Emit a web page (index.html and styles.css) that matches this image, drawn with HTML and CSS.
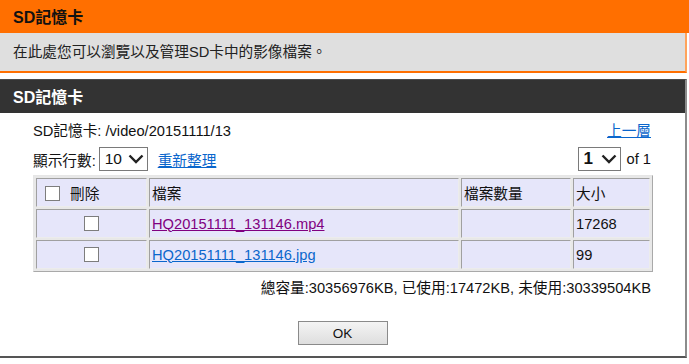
FILE: index.html
```html
<!DOCTYPE html>
<html lang="zh-Hant">
<head>
<meta charset="utf-8">
<title>SD記憶卡</title>
<link rel="stylesheet" href="styles.css">
</head>
<body>
<div class="top-title">SD記憶卡</div>
<div class="top-desc">在此處您可以瀏覽以及管理SD卡中的影像檔案。</div>
<div class="box">
  <div class="box-title">SD記憶卡</div>
  <div class="box-body">
    <div class="path-row">
      <span>SD記憶卡: /video/20151111/13</span>
      <a class="link" href="#">上一層</a>
    </div>
    <div class="ctrl-row">
      <div class="ctrl-left">
        <span>顯示行數:</span>
        <span class="select sel-rows">10<svg class="chev" width="16" height="10" viewBox="0 0 16 10"><path d="M1.5 1.5 L8 8 L14.5 1.5" fill="none" stroke="#222" stroke-width="2.4"/></svg></span>
        <a class="link" href="#">重新整理</a>
      </div>
      <div class="ctrl-right">
        <span class="select sel-page">1<svg class="chev" width="16" height="10" viewBox="0 0 16 10"><path d="M1.5 1.5 L8 8 L14.5 1.5" fill="none" stroke="#222" stroke-width="2.4"/></svg></span>
        <span>of 1</span>
      </div>
    </div>
    <table class="files">
      <colgroup>
        <col class="c1"><col class="c2"><col class="c3"><col class="c4">
      </colgroup>
      <tr>
        <td class="head-del"><span class="cb"></span><span>刪除</span></td>
        <td>檔案</td>
        <td>檔案數量</td>
        <td>大小</td>
      </tr>
      <tr>
        <td class="center"><span class="cb"></span></td>
        <td><a class="file visited" href="#">HQ20151111_131146.mp4</a></td>
        <td></td>
        <td>17268</td>
      </tr>
      <tr>
        <td class="center"><span class="cb"></span></td>
        <td><a class="file link" href="#">HQ20151111_131146.jpg</a></td>
        <td></td>
        <td>99</td>
      </tr>
    </table>
    <div class="total">總容量:30356976KB, 已使用:17472KB, 未使用:30339504KB</div>
    <div class="actions"><button class="btn" type="button">OK</button></div>
  </div>
</div>
</body>
</html>
```
FILE: styles.css
```css
html, body {
  margin: 0;
  padding: 0;
  background: #ffffff;
}
body {
  width: 689px;
  font-family: "Liberation Sans", "Noto Sans CJK TC", sans-serif;
  font-size: 14.67px;
  color: #111;
}
.top-title {
  height: 33px;
  box-sizing: border-box;
  padding: 2px 0 0 13px;
  line-height: 31px;
  background: #ff6f00;
  color: #111;
  font-weight: bold;
  font-size: 16px;
}
.top-desc {
  width: 687px;
  box-sizing: border-box;
  height: 40px;
  padding: 8px 0 0 13px;
  line-height: 22px;
  background: #dfdfdf;
  border-right: 2px solid #ffa35c;
  border-bottom: 2px solid #ff6f00;
  color: #222;
}
.box {
  width: 687px;
  margin-top: 6px;
}
.box-title {
  height: 34px;
  box-sizing: border-box;
  padding: 1px 0 0 13px;
  line-height: 33px;
  background: #333333;
  border-top: 1px solid #4a4a4a;
  border-right: 2px solid #8c8c8c;
  color: #fff;
  font-weight: bold;
  font-size: 16px;
}
.box-body {
  box-sizing: border-box;
  height: 245px;
  padding: 8px 34px 0 33px;
  border-right: 2px solid #8c8c8c;
  border-bottom: 2px solid #555;
}
.path-row {
  display: flex;
  justify-content: space-between;
  align-items: center;
  height: 20px;
  line-height: 20px;
  color: #111;
}
.link {
  color: #0a66cc;
  text-decoration: underline;
}
.ctrl-row {
  display: flex;
  justify-content: space-between;
  align-items: center;
  height: 26px;
  margin-top: 5px;
}
.ctrl-left, .ctrl-right {
  display: flex;
  align-items: center;
}
.select {
  display: inline-flex;
  align-items: center;
  justify-content: space-between;
  box-sizing: border-box;
  height: 24px;
  border: 1px solid #7a7a7a;
  background: #fff;
  padding: 0 3px 0 5px;
  color: #111;
  font-size: 15.5px;
}
.sel-rows {
  width: 49px;
  margin: 0 10px 0 3px;
}
.sel-page {
  width: 43px;
  margin-right: 6px;
  font-weight: bold;
  font-size: 17px;
}
.chev {
  display: block;
}
.files {
  table-layout: fixed;
  width: 618px;
  margin-top: 3px;
  border-collapse: separate;
  border-spacing: 2px;
  border: 1px solid;
  border-color: #e6e6e6 #a9a9a9 #a9a9a9 #e6e6e6;
  background: #e8e8e8;
}
.c1 { width: 111px; }
.c2 { width: 310px; }
.c3 { width: 110px; }
.c4 { width: 77px; }
.files td {
  height: 29px;
  box-sizing: border-box;
  padding: 0 2px;
  background: #e6e6fa;
  border: 1px solid;
  border-color: #a0a0a0 #ececec #ececec #a0a0a0;
  white-space: nowrap;
  color: #111;
}
.head-del {
  padding-left: 8px !important;
}
.head-del .cb {
  margin-right: 10px;
}
.center {
  text-align: center;
}
.cb {
  display: inline-block;
  width: 13px;
  height: 13px;
  border: 1px solid #7d7d7d;
  background: #fff;
  vertical-align: -2px;
}
.file.visited {
  color: #800080;
  text-decoration: underline;
}
.total {
  margin-top: 6px;
  height: 20px;
  line-height: 20px;
  text-align: right;
  color: #111;
}
.actions {
  display: flex;
  justify-content: center;
  margin-top: 23px;
  padding-left: 1px;
}
.btn {
  width: 90px;
  height: 24px;
  border: 1px solid #8a8a8a;
  background: linear-gradient(#f4f4f4, #dedede);
  font-family: "Liberation Sans", sans-serif;
  font-size: 13.5px;
  color: #111;
  padding: 0;
}
```
